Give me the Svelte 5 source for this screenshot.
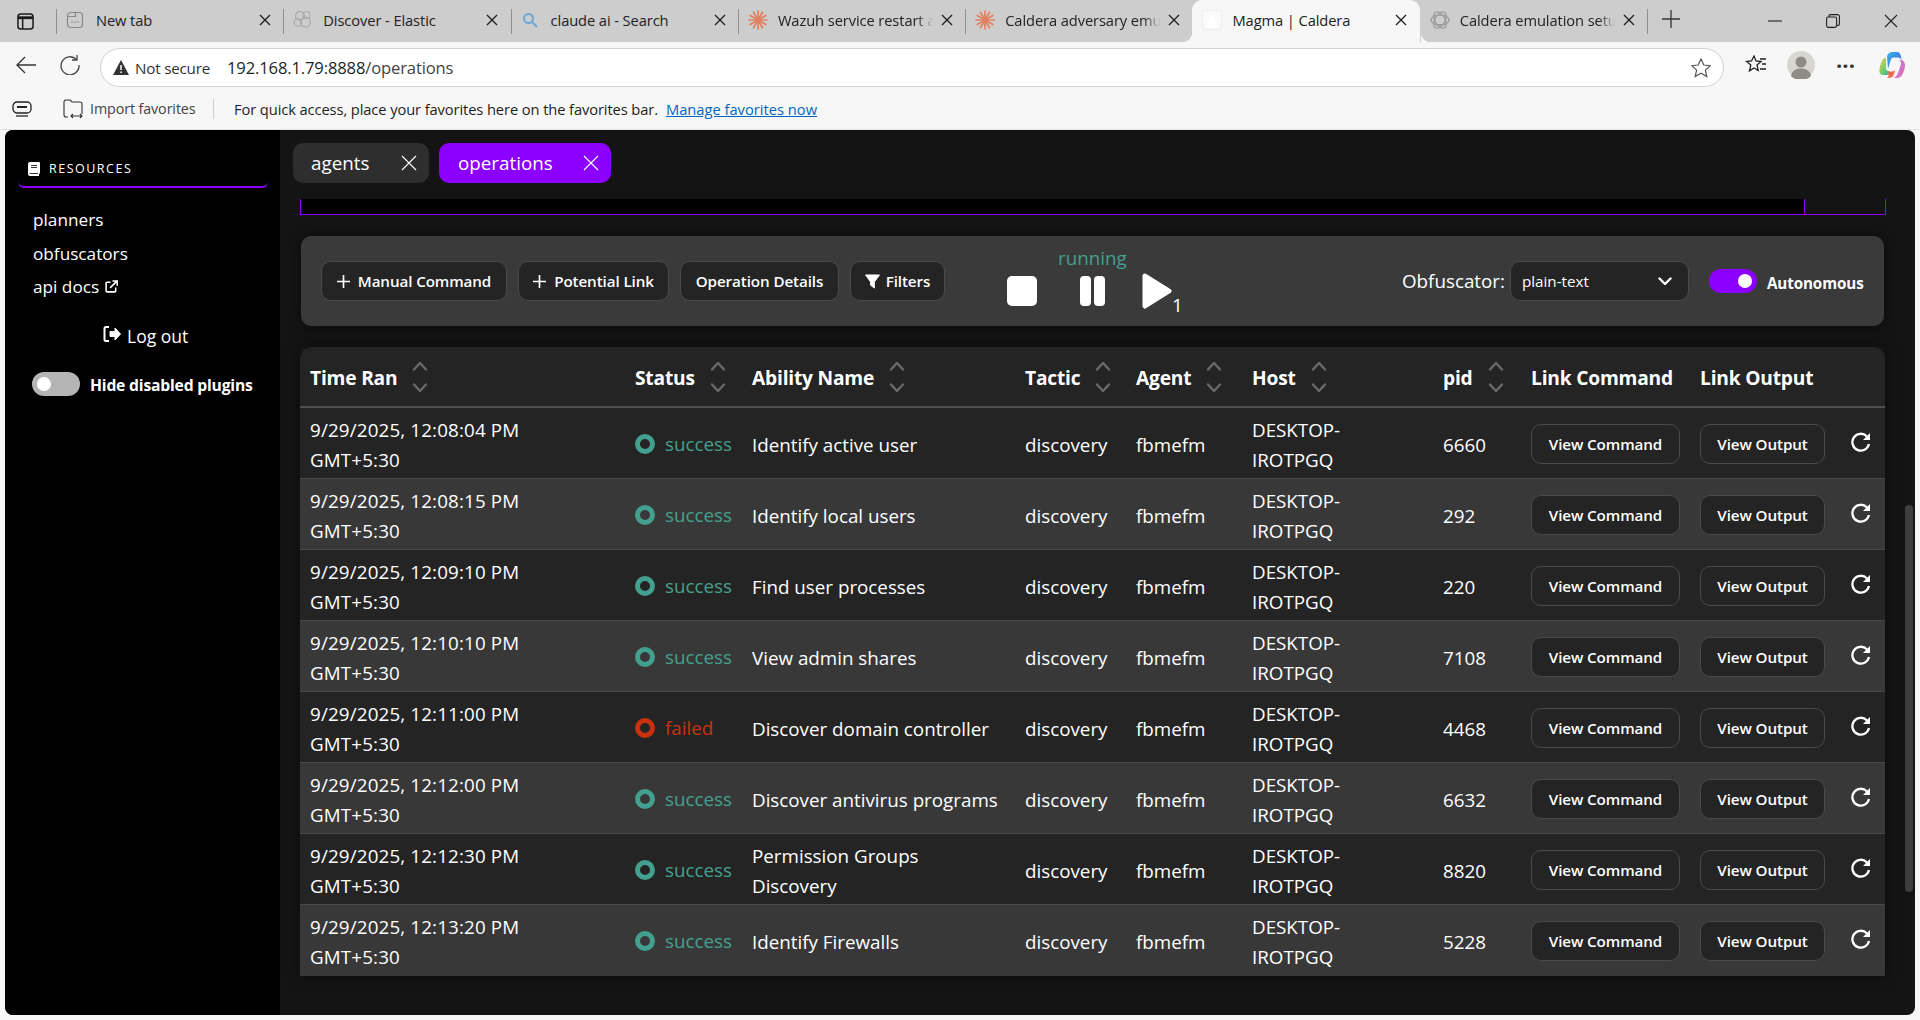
<script>
  const tabs = [
    { t: 'New tab', i: 'new', w: 1 },
    { t: 'Discover - Elastic', i: 'elastic' },
    { t: 'claude ai - Search', i: 'search' },
    { t: 'Wazuh service restart a', i: 'claude', fade: true },
    { t: 'Caldera adversary emu', i: 'claude', fade: true },
    { t: 'Magma | Caldera', i: 'magma', active: true },
    { t: 'Caldera emulation setu', i: 'gpt', fade: true }
  ];
  const rows = [
    ['12:08:04', 'success', 'Identify active user', '6660'],
    ['12:08:15', 'success', 'Identify local users', '292'],
    ['12:09:10', 'success', 'Find user processes', '220'],
    ['12:10:10', 'success', 'View admin shares', '7108'],
    ['12:11:00', 'failed', 'Discover domain controller', '4468'],
    ['12:12:00', 'success', 'Discover antivirus programs', '6632'],
    ['12:12:30', 'success', 'Permission Groups Discovery', '8820'],
    ['12:13:20', 'success', 'Identify Firewalls', '5228']
  ];
  const heads = [
    ['Time Ran', true], ['Status', true], ['Ability Name', true], ['Tactic', true], ['Agent', true],
    ['Host', true], ['pid', true], ['Link Command', false], ['Link Output', false], ['', false]
  ];
  const rays = Array.from({ length: 12 }, (_, k) => k * 30);
</script>

{#snippet favicon(kind)}
  {#if kind === 'new'}
    <svg class="fav" viewBox="0 0 18 18"><rect x="1.5" y="1.5" width="15" height="15" rx="3" fill="none" stroke="#8a8a8a" stroke-width="1.2"/><path d="M1.5 5.5h8V1.5" fill="none" stroke="#8a8a8a" stroke-width="1.2"/><path d="M5.5 11h1M8.5 11h1M11.5 11h1" stroke="#777" stroke-width="1.4"/></svg>
  {:else if kind === 'elastic'}
    <svg class="fav big" viewBox="0 0 20 20" fill="none" stroke="#a8a8a8" stroke-width="1.1"><circle cx="7" cy="6" r="4.5"/><circle cx="13.5" cy="5" r="3.5"/><circle cx="5" cy="12.5" r="3.8"/><circle cx="12.5" cy="12" r="5"/></svg>
  {:else if kind === 'search'}
    <svg class="fav" viewBox="0 0 18 18" fill="none" stroke="#6ea6d8" stroke-width="2"><circle cx="7.5" cy="7.5" r="4.5"/><path d="M11 11l5 5"/></svg>
  {:else if kind === 'claude'}
    <svg class="fav big" viewBox="0 0 20 20" stroke="#e08060" stroke-width="1.7" stroke-linecap="round">
      {#each rays as a}<line x1="10" y1="10" x2="10" y2="1" transform="rotate({a} 10 10)"/>{/each}
      <circle cx="10" cy="10" r="3" fill="#e08060" stroke="none"/>
    </svg>
  {:else if kind === 'magma'}
    <svg class="fav big" viewBox="0 0 20 20"><rect x=".5" y=".5" width="19" height="19" fill="#f9f9f9" stroke="#efefef"/><path d="M10 3l7 15H3z" fill="#fff"/></svg>
  {:else}
    <svg class="fav big" viewBox="0 0 20 20" fill="none" stroke="#9a9a9a" stroke-width="1.3"><ellipse cx="10" cy="10" rx="9" ry="5"/><ellipse cx="10" cy="10" rx="9" ry="5" transform="rotate(60 10 10)"/><ellipse cx="10" cy="10" rx="9" ry="5" transform="rotate(120 10 10)"/></svg>
  {/if}
{/snippet}

{#snippet chev()}
  <svg class="chev" viewBox="0 0 16 32" fill="none" stroke="#6a6a6a" stroke-width="2.4" stroke-linecap="round" stroke-linejoin="round"><path d="M2 8.5L8 2l6 6.5"/><path d="M2 23.5L8 30l6-6.5"/></svg>
{/snippet}

{#snippet plus()}
  <svg class="plus" viewBox="0 0 14 14" stroke="#fff" stroke-width="1.8"><path d="M7 0v14M0 7h14"/></svg>
{/snippet}

<div class="page">
  <div class="strip">
    <div class="panebtn">
      <svg viewBox="0 0 18 18" fill="none" stroke="#1a1a1a" stroke-width="1.6"><rect x="1" y="1" width="16" height="16" rx="3"/><path d="M1 5h16" stroke-width="3"/><path d="M6 5v12"/></svg>
    </div>
    {#each tabs as tab}
      <div class="tab" class:active={tab.active}>
        {@render favicon(tab.i)}
        <span class="title" class:fade={tab.fade}>{tab.t}</span>
        <svg class="x" viewBox="0 0 12 12" stroke="#222" stroke-width="1.4"><path d="M1 1l10 10M11 1L1 11"/></svg>
      </div>
    {/each}
    <div class="newtab"><svg viewBox="0 0 18 18" stroke="#333" stroke-width="1.3"><path d="M9 0v18M0 9h18"/></svg></div>
    <div class="winbtns">
      <span><svg viewBox="0 0 14 14" stroke="#222" stroke-width="1.1"><path d="M0 7h14"/></svg></span>
      <span><svg viewBox="0 0 14 14" fill="none" stroke="#222" stroke-width="1.1"><rect x=".6" y="3" width="10" height="10.4" rx="1.6"/><path d="M3 3V2a1.4 1.4 0 0 1 1.4-1.4h7A2 2 0 0 1 13.4 2.600v7.400a1.400 1.400 0 0 1-1.400 1.400h-1"/></svg></span>
      <span><svg viewBox="0 0 14 14" stroke="#222" stroke-width="1.1"><path d="M1 1l12 12M13 1L1 13"/></svg></span>
    </div>
  </div>

  <div class="addr">
    <div class="navbtn"><svg viewBox="0 0 20 20" fill="none" stroke="#333" stroke-width="1.3"><path d="M20 10H1M9 2l-8 8 8 8"/></svg></div>
    <div class="navbtn"><svg viewBox="0 0 20 20" fill="none" stroke="#444" stroke-width="1.3"><path d="M16.500 4.500A9 9 0 1 0 19 10"/><path d="M17 0v5h-5"/></svg></div>
    <div class="field">
      <svg class="warn" viewBox="0 0 16 15"><path d="M8 0l8 15H0z" fill="#333"/><path d="M8 5v5M8 11.500v1.500" stroke="#fff" stroke-width="1.500"/></svg>
      <span class="ns">Not secure</span>
      <span class="url">192.168.1.79:8888<span class="path">/operations</span></span>
      <svg class="star" viewBox="0 0 20 20" fill="none" stroke="#555" stroke-width="1.200"><path d="M10 1l2.800 6 6.400.7-4.800 4.400 1.400 6.400L10 15.200 4.200 18.500l1.400-6.400L.8 7.700 7.200 7z"/></svg>
    </div>
    <div class="cell"><svg viewBox="0 0 22 22" fill="none" stroke="#222" stroke-width="1.300"><path d="M9 2l2 5 5 .5-4 3.500 1.200 5.500L9 14l-4.500 2.800L5.800 11 1.500 7.500l5-.5z"/><path d="M15 5h6M17 10h4M15 15h6"/></svg></div>
    <div class="cell"><svg class="avatar" viewBox="0 0 28 28"><circle cx="14" cy="14" r="14" fill="#d8d6d2"/><circle cx="14" cy="11" r="5.500" fill="#8f8c87"/><path d="M4 25c1-6 6-7.500 10-7.500S23 19 24 25a14 14 0 0 1-20 0z" fill="#8f8c87"/></svg></div>
    <div class="cell dots">···</div>
    <div class="cell last">
      <svg class="copilot" viewBox="0 0 28 28">
        <defs>
          <linearGradient id="cpa" x1="0" y1="0" x2="1" y2="1"><stop offset="0" stop-color="#3db7ee"/><stop offset=".6" stop-color="#3a7be0"/><stop offset="1" stop-color="#9a6be0"/></linearGradient>
          <linearGradient id="cpb" x1="0" y1="0" x2="1" y2="1"><stop offset="0" stop-color="#f7c948"/><stop offset=".5" stop-color="#7bd06a"/><stop offset="1" stop-color="#2ea8a0"/></linearGradient>
          <linearGradient id="cpc" x1="0" y1="0" x2="1" y2="1"><stop offset="0" stop-color="#b37be8"/><stop offset="1" stop-color="#e86fb0"/></linearGradient>
        </defs>
        <path d="M9 5.500C10 2 12 1 15 1h4c2 0 3 1 3.500 3L24 9c-1-2-3-2.500-5-2.500h-3c-2 0-3 1-3.500 3L10 18z" fill="url(#cpa)"/>
        <path d="M8 7c-3 0-4 2-5 5-1 3-2 7-1.500 9 .5 2.500 2 3 4 3h3c2 0 3-1 4-3l-2-1c-2 0-3-2-2.500-5z" fill="url(#cpb)"/>
        <path d="M20 9h3c2 0 4 2 4 5s-1 7-3 10c-1 2-3 3-5 3h-5c3 0 5-2 6-5l3-9c.500-2-1-4-3-4z" fill="url(#cpc)"/>
        <path d="M10 20c2 1 5 1 7-1l-1 4c-1 3-3 4-6 4h-1c2-1 2-4 1-7z" fill="#ef6a4c"/>
      </svg>
    </div>
  </div>

  <div class="favbar">
    <svg class="favtoggle" viewBox="0 0 20 16" fill="none" stroke="#222" stroke-width="1.300"><rect x="1" y="1" width="18" height="11" rx="4"/><path d="M5 6h10" stroke-width="2"/><path d="M4 15h12"/></svg>
    <svg class="imp" viewBox="0 0 20 20" fill="none" stroke="#333" stroke-width="1.100"><path d="M5 18H3a2 2 0 0 1-2-2V3a2 2 0 0 1 2-2h4l2 2h8a2 2 0 0 1 2 2v10"/><path d="M8 17h11M10 15l-2 2 2 2M17 15l2 2-2 2"/></svg>
    <span class="imptext">Import favorites</span>
    <i class="favsep"></i>
    <span class="quick">For quick access, place your favorites here on the favorites bar.</span>
    <span class="manage">Manage favorites now</span>
  </div>

  <div class="view">
    <aside>
      <div class="reshead">
        <svg viewBox="0 0 12 14"><path d="M2 0h9a1 1 0 0 1 1 1v10l-1 1v2H2a2 2 0 0 1-2-2V2a2 2 0 0 1 2-2z" fill="#fff"/><path d="M3 3.500h6M3 5.500h6M1.500 11.500H10" stroke="#000" stroke-width=".8"/></svg>
        <span>RESOURCES</span>
      </div>
      <nav>
        <span>planners</span>
        <span>obfuscators</span>
        <span>api docs <svg viewBox="0 0 14 14" fill="none" stroke="#fff" stroke-width="1.700"><path d="M6 2.500H2.200a1 1 0 0 0-1 1v8.300a1 1 0 0 0 1 1h8.300a1 1 0 0 0 1-1V8"/><path d="M5.500 8.500L12.500 1.500M8 1h5.200v5.200" /></svg></span>
      </nav>
      <div class="logout">
        <svg viewBox="0 0 18 18" fill="none" stroke="#fff"><path d="M6 2H3a1.500 1.500 0 0 0-1.500 1.500v11A1.500 1.500 0 0 0 3 16h3" stroke-width="2"/><path d="M7 6.500h5V3l5.500 6L12 15v-3.500H7z" fill="#fff" stroke-width="1" stroke-linejoin="round"/></svg>
        <span>Log out</span>
      </div>
      <div class="hide">
        <span class="toggle off"><i></i></span>
        <b>Hide disabled plugins</b>
      </div>
    </aside>

    <main>
      <div class="tabbar">
        <div class="apptab"><span>agents</span><svg viewBox="0 0 16 16" stroke="#fff" stroke-width="1.100"><path d="M1 1l14 14M15 1L1 15"/></svg></div>
        <div class="apptab on"><span>operations</span><svg viewBox="0 0 16 16" stroke="#fff" stroke-width="1.100"><path d="M1 1l14 14M15 1L1 15"/></svg></div>
      </div>
      <div class="below">
        <div class="content">
          <div class="strip-edge"><div class="black"></div><div class="edge"></div></div>

          <section class="controls">
            <button class="btn b1">{@render plus()} Manual Command</button>
            <button class="btn b2">{@render plus()} Potential Link</button>
            <button class="btn b3">Operation Details</button>
            <button class="btn b4"><svg class="funnel" viewBox="0 0 16 16"><path d="M.5 1h15L10 8.500V15l-4-3V8.500z" fill="#fff" stroke="#fff" stroke-linejoin="round"/></svg> Filters</button>

            <div class="player">
              <span class="running">running</span>
              <div class="pbtns">
                <svg class="stop" viewBox="0 0 30 30"><rect width="30" height="30" rx="5" fill="#fff"/></svg>
                <svg class="pause" viewBox="0 0 25 30"><rect width="11" height="30" rx="4" fill="#fff"/><rect x="14" width="11" height="30" rx="4" fill="#fff"/></svg>
                <div class="playwrap">
                  <svg class="play" viewBox="0 0 30 36"><path d="M3 3l24 15L3 33z" fill="#fff" stroke="#fff" stroke-width="5" stroke-linejoin="round"/></svg>
                  <span class="one">1</span>
                </div>
              </div>
            </div>

            <span class="oblabel">Obfuscator:</span>
            <div class="select">
              <span>plain-text</span>
              <svg viewBox="0 0 14 9" fill="none" stroke="#fff" stroke-width="2.400" stroke-linecap="round" stroke-linejoin="round"><path d="M1.500 1.500L7 7l5.500-5.500"/></svg>
            </div>
            <span class="toggle on"><i></i></span>
            <b class="auto">Autonomous</b>
          </section>

          <table>
            <colgroup>
              <col class="c1"/><col class="c2"/><col class="c3"/><col class="c4"/><col class="c5"/>
              <col class="c6"/><col class="c7"/><col class="c8"/><col class="c9"/><col class="c10"/>
            </colgroup>
            <thead>
              <tr>
                {#each heads as h}
                  <th><span class="th">{h[0]}{#if h[1]}{@render chev()}{/if}</span></th>
                {/each}
              </tr>
            </thead>
            <tbody>
              {#each rows as r}
                <tr>
                  <td class="when">9/29/2025, {r[0]} PM<br/>GMT+5:30</td>
                  <td><span class="status {r[1]}"><i></i>{r[1]}</span></td>
                  <td class="ability">{r[2]}</td>
                  <td>discovery</td>
                  <td>fbmefm</td>
                  <td>DESKTOP-<br/>IROTPGQ</td>
                  <td>{r[3]}</td>
                  <td class="act"><button class="btn vc">View Command</button></td>
                  <td class="act"><button class="btn vo">View Output</button></td>
                  <td class="act"><svg class="redo" viewBox="0 0 20 20" fill="none" stroke="#fff" stroke-width="2.300"><path d="M16 4.500A8.400 8.400 0 1 0 18 12"/><path d="M19 1v7h-7z" fill="#fff" stroke="none"/></svg></td>
                </tr>
              {/each}
            </tbody>
          </table>
        </div>
        <div class="scroll"><div class="thumb"></div></div>
      </div>
    </main>
  </div>
</div>

<style>
  :global(body) { margin: 0; background: #f7f7f7; }
  .page {
    width: 1920px; height: 1020px; overflow: hidden; display: flex; flex-direction: column;
    font-family: "Open Sans", "Noto Sans", sans-serif; background: #f7f7f7; color: #fff;
  }
  svg { display: block; flex: none; }

  .strip { height: 42px; background: #cdcdcd; display: flex; color: #222; font-size: 14.7px; }
  .panebtn { width: 56px; display: flex; align-items: center; padding-left: 17px; box-sizing: border-box; }
  .panebtn svg { width: 17px; height: 17px; }
  .tab {
    width: 227.3px; flex: none; box-sizing: border-box; height: 39px; display: flex; align-items: center;
    padding-left: 9px; position: relative; border-left: 1px solid transparent;
  }
  .tab::before { content: ""; position: absolute; left: -1px; top: 9px; height: 25px; width: 1px; background: #8f8f8f; }
  .tab.active { background: #f7f7f7; border-radius: 10px 10px 0 0; height: 42px; padding-bottom: 3px; }
  .tab.active::before { display: none; }
  .tab.active + .tab::before { display: none; }
  .tab.active::after {
    content: ""; position: absolute; left: -11px; right: -11px; bottom: 0; height: 10px; z-index: 0;
    background:
      radial-gradient(circle at 0 0, #cdcdcd 10px, #f7f7f7 10.500px) left bottom / 10px 10px no-repeat,
      radial-gradient(circle at 100% 0, #cdcdcd 10px, #f7f7f7 10.500px) right bottom / 10px 10px no-repeat;
  }
  .fav { width: 18px; height: 18px; margin-right: 12px; position: relative; z-index: 1; }
  .fav.big { width: 20px; height: 20px; margin-right: 10px; }
  .title { width: 157px; white-space: nowrap; position: relative; z-index: 1; letter-spacing: -.1px; }
  .title.fade { -webkit-mask-image: linear-gradient(90deg, #000 88%, transparent 99%); mask-image: linear-gradient(90deg, #000 88%, transparent 99%); }
  .x { width: 12px; height: 12px; margin-left: 6px; position: relative; z-index: 1; }
  .newtab { width: 46px; display: flex; align-items: center; justify-content: center; border-left: 1px solid transparent; position: relative; }
  .newtab::before { content: ""; position: absolute; left: -1px; top: 9px; height: 25px; width: 1px; background: #8f8f8f; }
  .newtab svg { width: 18px; height: 18px; margin-top: -5px; }
  .winbtns { margin-left: auto; display: flex; }
  .winbtns span { width: 58px; display: flex; align-items: center; justify-content: center; }
  .winbtns svg { width: 14px; height: 14px; }

  .addr { height: 46px; display: flex; align-items: flex-start; color: #222; }
  .navbtn { width: 45px; height: 46px; display: flex; align-items: center; justify-content: center; margin-left: 2px; margin-right: -2px; }
  .navbtn svg { width: 20px; height: 20px; }
  .navbtn:first-child { margin-left: 3px; margin-right: -3px; }
  .field {
    width: 1624px; height: 39px; margin: 6px 0 0 10px; box-sizing: border-box; background: #fff; border: 1px solid #d2d2d2;
    border-radius: 20px; display: flex; align-items: center; padding-left: 12px; font-size: 15.200px;
  }
  .warn { width: 16px; height: 15px; }
  .ns { margin-left: 6px; color: #333; letter-spacing: -.2px; }
  .url { margin-left: 17px; color: #1f1f1f; font-size: 16.600px; letter-spacing: -.15px; }
  .path { color: #444; }
  .star { width: 20px; height: 20px; margin-left: auto; margin-right: 12px; }
  .cell { width: 45px; height: 46px; display: flex; align-items: center; justify-content: center; }
  .cell:nth-child(4) { margin-left: 9px; }
  .cell svg { width: 22px; height: 22px; }
  .cell .avatar { width: 28px; height: 28px; }
  .cell .copilot { width: 28px; height: 28px; }
  .cell.last { width: 48px; }
  .dots { font-size: 22px; font-weight: 700; color: #333; }

  .favbar { height: 42px; box-sizing: border-box; border-bottom: 1px solid #e4e4e4; display: flex; align-items: center; font-size: 14.700px; color: #1f1f1f; }
  .favtoggle { width: 20px; height: 16px; margin-left: 12px; }
  .imp { width: 20px; height: 20px; margin-left: 31px; }
  .imptext { margin-left: 7px; color: #444; font-size: 14.300px; letter-spacing: -.1px; width: 123px; white-space: nowrap; }
  .favsep { width: 1px; height: 20px; background: #cfcfcf; }
  .quick { margin-left: 20px; white-space: nowrap; letter-spacing: -.1px; }
  .manage { margin-left: 8px; color: #0067c0; text-decoration: underline; white-space: nowrap; }

  .view { height: 885px; margin: 0 5px; display: flex; border-radius: 8px; overflow: hidden; background: #141414; }
  aside { width: 275px; flex: none; background: #000; font-size: 17.200px; }
  .reshead {
    margin: 0 12px 0 13px; height: 58px; box-sizing: border-box; padding: 30px 0 0 10px; display: flex; gap: 9px;
    align-items: flex-start; border-bottom: 2px solid #8b00ff; border-radius: 0 0 6px 6px; font-size: 12.500px; letter-spacing: 1.500px;
  }
  .reshead svg { width: 12px; height: 14px; margin-top: 2px; }
  nav { display: flex; flex-direction: column; padding: 15px 0 0 28px; }
  nav span { height: 33.500px; line-height: 33.500px; display: flex; align-items: center; gap: 6px; }
  nav svg { width: 13px; height: 13px; }
  .logout { display: flex; align-items: center; margin: 17px 0 0 98px; gap: 6px; height: 30px; font-size: 17.500px; }
  .logout svg { width: 18px; height: 18px; margin-top: -3px; }
  .hide { display: flex; align-items: center; margin: 21px 0 0 27px; gap: 10px; }
  .hide b { font-size: 15.700px; font-weight: 700; letter-spacing: -.2px; white-space: nowrap; margin-top: 2px; }
  .toggle { width: 48px; height: 24px; border-radius: 12px; display: flex; align-items: center; flex: none; box-sizing: border-box; padding: 0 5px; }
  .toggle i { width: 14px; height: 14px; border-radius: 50%; background: #fff; }
  .toggle.off { background: #b5b5b5; }
  .toggle.on { background: #8b00ff; justify-content: flex-end; }

  main { flex: 1; display: flex; flex-direction: column; min-width: 0; }
  .tabbar { height: 69px; box-sizing: border-box; padding: 13px 0 0 13px; display: flex; gap: 10px; align-items: flex-start; }
  .apptab {
    height: 40px; display: flex; align-items: center; background: #2e2e2e; border-radius: 10px; box-sizing: border-box;
    width: 136px; padding: 0 12px 0 18px; justify-content: space-between; font-size: 18.800px;
  }
  .apptab.on { background: #8b00ff; width: 172px; padding-left: 19px; }
  .apptab svg { width: 16px; height: 16px; }
  .below { flex: 1; display: flex; min-height: 0; }
  .content { flex: 1; min-width: 0; padding: 0 20px; }
  .scroll { width: 10px; flex: none; padding-top: 306px; }
  .thumb { width: 8px; height: 387px; background: #3e3e3e; border-radius: 4px; }

  .strip-edge { height: 16px; display: flex; margin-right: -1px; }
  .black { flex: 1; background: #000; border-left: 1px solid #8b00ff; border-bottom: 1px solid #8b00ff; }
  .edge { width: 82px; border-left: 1px solid #8b00ff; border-right: 1px solid #8b00ff; border-bottom: 1px solid #8b00ff; box-sizing: border-box; }

  .controls {
    margin: 21px 1px; height: 90px; background: #3a3a3a; border-radius: 10px; display: flex; align-items: center;
    padding-left: 20px; box-shadow: 0 0 14px rgba(0,0,0,.55); position: relative;
  }
  .btn {
    height: 40px; box-sizing: border-box; background: #242424; color: #fff; border: 1px solid #4a4a4a; border-radius: 10px; font: 600 15.200px "Open Sans", sans-serif;
    display: inline-flex; align-items: center; justify-content: center; gap: 8px; padding: 0; letter-spacing: -.1px; white-space: nowrap;
  }
  .plus { width: 13px; height: 13px; }
  .b1 { width: 186px; }
  .b2 { width: 151px; margin-left: 11px; }
  .b3 { width: 159px; margin-left: 11px; }
  .b4 { width: 95px; margin-left: 11px; gap: 6px; }
  .funnel { width: 15px; height: 15px; }
  .player { margin-left: 62px; height: 90px; position: relative; width: 356px; flex: none; }
  .running { position: absolute; left: 51px; top: 8px; font-size: 18.800px; color: #44a08e; line-height: 28px; }
  .pbtns { display: flex; align-items: center; padding-top: 37px; }
  .stop { width: 30px; height: 30px; }
  .pause { width: 25px; height: 30px; margin-left: 43px; }
  .playwrap { margin-left: 37px; position: relative; }
  .play { width: 30px; height: 36px; }
  .one { position: absolute; left: 30px; top: 20px; font-size: 19px; line-height: 24px; }
  .oblabel { margin-left: 39px; font-size: 18.800px; white-space: nowrap; }
  .select {
    width: 179px; height: 40px; box-sizing: border-box; margin-left: 5px; background: #242424; border: 1px solid #4a4a4a; border-radius: 10px; display: flex; align-items: center;
    justify-content: space-between; padding: 0 16px 0 11px; font-size: 15.200px;
  }
  .select svg { width: 14px; height: 9px; }
  .controls .toggle { margin-left: 20px; margin-top: -1px; }
  .auto { margin-left: 10px; margin-top: 3px; font-size: 15.200px; font-weight: 700; white-space: nowrap; letter-spacing: -.1px; }

  table { width: 1585px; table-layout: fixed; border-collapse: separate; border-spacing: 0; font-size: 18.800px; line-height: 30px; box-shadow: 0 0 14px rgba(0,0,0,.5); }
  .c1 { width: 325px; } .c2 { width: 117px; } .c3 { width: 273px; } .c4 { width: 111px; } .c5 { width: 116px; }
  .c6 { width: 191px; } .c7 { width: 88px; } .c8 { width: 169px; } .c9 { width: 150px; } .c10 { width: 45px; }
  th { height: 61px; box-sizing: border-box; background: #242424; border-bottom: 2px solid #4f4f4f; text-align: left; padding: 2px 0 0 10px; font-weight: 700; font-size: 19.200px; white-space: nowrap; letter-spacing: -.2px; }
  th:first-child { border-top-left-radius: 12px; }
  th:last-child { border-top-right-radius: 12px; }
  .th { display: flex; align-items: center; gap: 15px; }
  .chev { width: 16px; height: 32px; margin-top: -2px; }
  td { height: 71px; box-sizing: border-box; padding: 4px 0 0 10px; background: #242424; border-bottom: 1px solid #4a4a4a; vertical-align: middle; }
  td.when { letter-spacing: .15px; }
  td.ability { padding-right: 16px; }
  td.act { padding-top: 2px; }
  tbody tr:nth-child(even) td { background: #383838; }
  tbody tr:last-child td { border-bottom-color: transparent; }
  .status { display: inline-flex; align-items: center; gap: 10px; }
  .status i { width: 20px; height: 20px; border-radius: 50%; box-sizing: border-box; border: 5px solid currentColor; }
  .status.success { color: #44a08e; }
  .status.failed { color: #c9310f; }
  .vc { width: 149px; }
  .vo { width: 125px; }
  .redo { width: 20px; height: 20px; margin: -4px 0 0 1px; }
</style>
